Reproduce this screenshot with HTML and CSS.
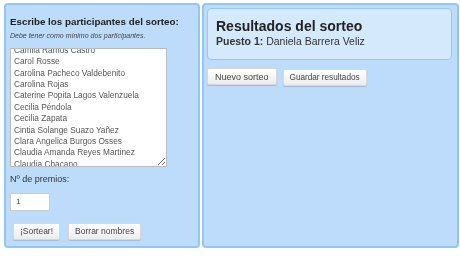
FILE: index.html
```html
<!DOCTYPE html>
<html lang="es">
<head>
    <meta charset="UTF-8">
    <meta name="viewport" content="width=device-width, initial-scale=1.0">
    <title>Sorteo</title>
    <link rel="stylesheet" href="styles.css">
</head>
<body>
    <div class="layout">
        <div class="panel panel-left">
            <h3>Escribe los participantes del sorteo:</h3>
            <p class="hint">Debe tener como mínimo dos participantes.</p>
            <textarea id="names" class="names" spellcheck="false">Alejandra Soto
Andrea Muñoz
Camila Ramos Castro
Carol Rosse
Carolina Pacheco Valdebenito
Carolina Rojas
Caterine Popita Lagos Valenzuela
Cecilia Péndola
Cecilia Zapata
Cintia Solange Suazo Yañez
Clara Angelica Burgos Osses
Claudia Amanda Reyes Martinez
Claudia Chacano
Daniela Barrera Veliz
Daniela Fuentes
Fernanda Silva
Francisca Herrera
Javiera Paz Morales
Macarena Tapia
Valentina Rojas</textarea>
            <label for="prizes" class="label">Nº de premios:</label>
            <input type="text" id="prizes" class="prizes" value="1">
            <div class="actions">
                <button class="btn">¡Sortear!</button>
                <button class="btn">Borrar nombres</button>
            </div>
        </div>

        <div class="panel panel-right">
            <div class="result">
                <h2>Resultados del sorteo</h2>
                <div class="winner"><b>Puesto 1:</b> Daniela Barrera Veliz</div>
            </div>
            <div class="actions actions-top">
                <button class="btn btn-wide">Nuevo sorteo</button>
                <button class="btn btn-low">Guardar resultados</button>
            </div>
        </div>
    </div>

    <script>
        document.getElementById('names').scrollTop = 27;
    </script>
</body>
</html>
```

FILE: styles.css
```css
body {
    margin: 0;
    background-color: white;
    font-family: "Liberation Sans", Arial, sans-serif;
    color: #333;
}

.layout {
    display: flex;
    gap: 2px;
    padding: 3px 1px 0 4px;
    width: 460px;
    box-sizing: border-box;
}

.panel {
    background-color: #bddcfb;
    border: 2px solid #92c6f7;
    border-radius: 4px;
    box-sizing: border-box;
    height: 245px;
}

.panel-left {
    width: 196px;
    padding: 10px 0 0 4px;
}

.panel-right {
    flex: 1;
    padding: 3px 5px 0 3px;
}

h3 {
    margin: 0;
    font-size: 9.8px;
    font-weight: bold;
    color: #222;
    line-height: 14px;
}

.hint {
    margin: 3px 0 9px;
    font-size: 7px;
    font-style: italic;
    color: #444;
}

.names {
    display: block;
    width: 157px;
    height: 119px;
    margin: 0;
    padding: 0 0 0 3px;
    border: 1px solid #bbb;
    background-color: white;
    font-family: "Liberation Sans", Arial, sans-serif;
    font-size: 8.3px;
    line-height: 11.4px;
    color: #555;
    resize: vertical;
    box-sizing: border-box;
}

.names::-webkit-scrollbar {
    width: 10px;
}

.names::-webkit-scrollbar-track {
    background-color: #f1f1f1;
}

.names::-webkit-scrollbar-thumb {
    background-color: #d6d6d6;
    border: 1px solid #888;
}

.names::-webkit-scrollbar-button:single-button {
    height: 10px;
    background-color: #f1f1f1;
}

.label {
    display: block;
    margin: 7px 0 6px;
    font-size: 9px;
    color: #333;
}

.prizes {
    width: 40px;
    height: 18px;
    padding: 0 5px;
    border: 1px solid #ccc;
    font-size: 8px;
    color: #444;
    box-sizing: border-box;
}

.actions {
    display: flex;
    gap: 8px;
    margin: 12px 0 0 3px;
    align-items: flex-start;
}

.actions-top {
    margin: 8px 0 0 0;
    gap: 6px;
}

.btn {
    height: 17px;
    padding: 0 6px;
    font-family: "Liberation Sans", Arial, sans-serif;
    font-size: 8.5px;
    color: #444;
    background: linear-gradient(#ffffff, #ececec);
    border: 1px solid #d8d8d8;
    border-radius: 2px;
    box-shadow: 0 1px 1px rgba(0, 0, 0, 0.15);
}

.btn-wide {
    padding: 0 7px;
    font-size: 9px;
}

.btn-low {
    margin-top: 1px;
    font-size: 8.2px;
    padding: 0 6px;
}

.result {
    background-color: #d5e9fc;
    border: 1px solid #95c8f6;
    border-radius: 4px;
    height: 52px;
    padding: 8px 0 0 8px;
    box-sizing: border-box;
}

h2 {
    margin: 0;
    font-size: 14px;
    font-weight: bold;
    color: #222;
    line-height: 18px;
}

.winner {
    font-size: 10.5px;
    color: #333;
    line-height: 13px;
}
```
